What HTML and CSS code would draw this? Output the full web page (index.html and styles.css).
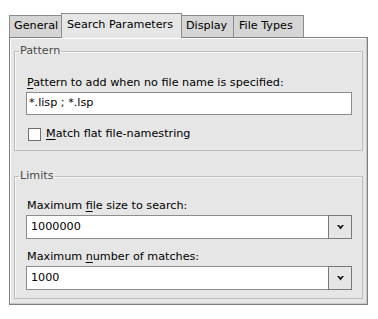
FILE: index.html
```html
<!DOCTYPE html>
<html>
<head>
<meta charset="utf-8">
<link rel="stylesheet" href="styles.css">
</head>
<body>
<div class="dialog">
  <div class="tabs">
    <div class="tab tab-general">General</div>
    <div class="tab tab-search active">Search Parameters</div>
    <div class="tab tab-display">Display</div>
    <div class="tab tab-types">File Types</div>
  </div>
  <div class="panel">
    <fieldset class="group group-pattern">
      <legend>Pattern</legend>
      <div class="field-label"><u>P</u>attern to add when no file name is specified:</div>
      <div class="textbox">*.lisp ; *.lsp</div>
      <div class="check-row">
        <span class="checkbox"></span>
        <span class="check-label"><u>M</u>atch flat file-namestring</span>
      </div>
    </fieldset>
    <fieldset class="group group-limits">
      <legend>Limits</legend>
      <div class="field-label">Maximum <u>f</u>ile size to search:</div>
      <div class="combo">
        <div class="combo-text">1000000</div>
        <div class="combo-btn"><svg width="7" height="5" viewBox="0 0 7 5"><path d="M0 0 H2 L3.5 1.6 L5 0 H7 L3.5 4.5 Z" fill="#1a1a1a"/></svg></div>
      </div>
      <div class="field-label second">Maximum <u>n</u>umber of matches:</div>
      <div class="combo">
        <div class="combo-text">1000</div>
        <div class="combo-btn"><svg width="7" height="5" viewBox="0 0 7 5"><path d="M0 0 H2 L3.5 1.6 L5 0 H7 L3.5 4.5 Z" fill="#1a1a1a"/></svg></div>
      </div>
    </fieldset>
  </div>
</div>
</body>
</html>
```
FILE: styles.css
```css
html, body {
  margin: 0;
  padding: 0;
  background: #ffffff;
}
body {
  font-family: "DejaVu Sans", sans-serif;
  font-size: 11.2px;
  color: #000;
}
.dialog {
  padding: 13px 0 0 9px;
  width: 359px;
}
.tabs {
  display: flex;
  align-items: flex-end;
  height: 24px;
  position: relative;
  z-index: 1;
}
.tab {
  box-sizing: border-box;
  height: 22px;
  line-height: 20px;
  padding-left: 4px;
  white-space: nowrap;
  background: #d5d5d5;
  border: 1px solid #8c8c8c;
  border-bottom: none;
  border-left: none;
}
.tab-general {
  width: 53px;
  border-left: 1px solid #8c8c8c;
}
.tab-search {
  width: 121px;
}
.tab-display {
  width: 52px;
}
.tab-types {
  width: 70px;
  padding-left: 5px;
}
.tab.active {
  height: 25px;
  line-height: 21px;
  background: #e6e6e6;
  border-left: 1px solid #8c8c8c;
  margin-left: -1px;
  margin-bottom: -1px;
  padding-left: 5px;
}
.tab.active + .tab {
  border-left: none;
}
.panel {
  box-sizing: border-box;
  height: 268px;
  background: #e6e6e6;
  border: 1px solid #7f7f7f;
  box-shadow: inset -1px -1px 0 #c8c8c8, inset 1px 1px 0 #ffffff;
  padding: 6px 4px 0 4px;
}
.group {
  margin: 0;
  border: 1px solid #bdbdbd;
  box-shadow: inset 1px 1px 0 #f8f8f8;
  padding: 0 10px 0 11px;
  min-width: 0;
}
.group legend {
  padding: 0 1px;
  margin-left: -7px;
  line-height: 14px;
  color: #4a4a4a;
}
.group-pattern {
  height: 107px;
  box-sizing: border-box;
}
.group-limits {
  margin-top: 18px;
  height: 130px;
  box-sizing: border-box;
}
.field-label {
  line-height: 14px;
  margin-top: 18px;
  margin-left: 1px;
  margin-bottom: 2px;
}
.group-limits .field-label {
  margin-top: 16px;
}
.group-limits .field-label.second {
  margin-top: 11px;
}
u {
  text-decoration: underline;
  text-underline-offset: 2px;
}
.textbox {
  box-sizing: border-box;
  height: 23px;
  background: #fff;
  border: 1px solid #8c8c8c;
  line-height: 20px;
  padding-left: 2px;
}
.check-row {
  display: flex;
  align-items: center;
  margin-top: 12px;
  margin-left: 2px;
  height: 14px;
}
.checkbox {
  box-sizing: border-box;
  width: 13px;
  height: 13px;
  background: #fff;
  border: 1px solid #6f6f6f;
}
.check-label {
  margin-left: 5px;
  line-height: 14px;
}
.combo {
  display: flex;
  height: 24px;
}
.combo-text {
  box-sizing: border-box;
  flex: 1;
  background: #fff;
  border: 1px solid #8c8c8c;
  border-right: none;
  line-height: 22px;
  padding-left: 4px;
}
.combo-btn {
  box-sizing: border-box;
  width: 24px;
  height: 24px;
  background: #e6e6e6;
  border: 1px solid #7a7a7a;
  display: flex;
  align-items: center;
  justify-content: center;
}
```
